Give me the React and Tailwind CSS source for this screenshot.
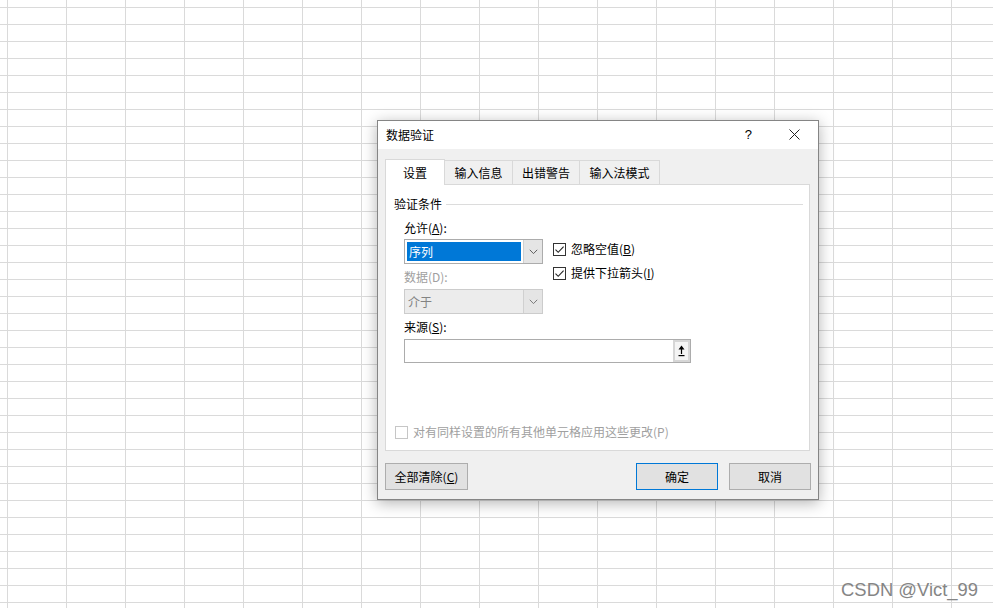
import React from "react";

const cjk = "font-['Noto_Sans_CJK_SC','Microsoft_YaHei',sans-serif]";

function Chevron({ color = "#606060" }) {
  return (
    <svg width="9" height="6" viewBox="0 0 9 6" fill="none">
      <path d="M0.8 0.8 L4.5 4.6 L8.2 0.8" stroke={color} strokeWidth="1" />
    </svg>
  );
}

function CheckBox({ checked, disabled, label }) {
  return (
    <div className="flex items-center h-[16px]">
      <div
        className={
          "w-[13px] h-[13px] border bg-white flex items-center justify-center " +
          (disabled ? "border-[#c6c6c6]" : "border-[#333333]")
        }
      >
        {checked && (
          <svg width="11" height="11" viewBox="0 0 11 11" fill="none">
            <path d="M1.5 5.6 L4.2 8.3 L9.6 2.6" stroke="#222" strokeWidth="1.1" />
          </svg>
        )}
      </div>
      <span className={"ml-[5px] " + (disabled ? "text-[#a0a0a0]" : "text-black")}>{label}</span>
    </div>
  );
}

function Tab({ label, width, active }) {
  return (
    <div
      className={
        "flex items-center justify-center border-t border-r border-[#d9d9d9] " +
        (active
          ? "h-[26px] bg-white border-l relative z-10"
          : "h-[25px] bg-[#f0f0f0] border-b")
      }
      style={{ width }}
    >
      {label}
    </div>
  );
}

export default function App() {
  return (
    <div
      className={
        "relative w-[993px] h-[608px] overflow-hidden bg-white " +
        "bg-[linear-gradient(to_right,#dadada_1px,transparent_1px),linear-gradient(to_bottom,#dadada_1px,transparent_1px)] " +
        "bg-size-[59px_17px] bg-position-[7px_7px]"
      }
    >
      {/* dialog window */}
      <div
        className={
          "absolute left-[377px] top-[120px] w-[442px] h-[380px] border border-[#858585] bg-[#f0f0f0] " +
          "shadow-[0_3px_14px_rgba(0,0,0,0.3)] flex flex-col text-[12px] leading-[16px] text-black " +
          cjk
        }
      >
        <div className="h-[28px] shrink-0 bg-white flex items-center pl-[8px] pb-px">
          <span>数据验证</span>
          <span className="ml-auto font-['Liberation_Sans',sans-serif] text-[13px]">?</span>
          <div className="ml-[36px] mr-[18px] w-[12px] h-[12px] flex items-center justify-center">
            <svg width="11" height="11" viewBox="0 0 11 11" fill="none">
              <path d="M0.5 0.5 L10.5 10.5 M10.5 0.5 L0.5 10.5" stroke="#222" strokeWidth="1" />
            </svg>
          </div>
        </div>

        <div className="flex flex-col pl-[7px] pt-[10px]">
          <div className="flex items-end -mb-px">
            <Tab label="设置" width={60} active />
            <Tab label="输入信息" width={68} />
            <Tab label="出错警告" width={67} />
            <Tab label="输入法模式" width={80} />
          </div>

          <div className="w-[425px] h-[267px] bg-white border border-[#d9d9d9] flex flex-col">
            <div className="flex items-center mt-[11px] pl-[8px] pr-[6px]">
              <span>验证条件</span>
              <div className="flex-1 h-px bg-[#dcdcdc] ml-[4px]" />
            </div>

            <div className="flex ml-[18px] mt-[8px]">
              <div className="w-[139px] flex flex-col">
                <span>允许(<span className="underline">A</span>):</span>
                <div className="mt-[3px] h-[25px] flex border border-[#acacac] bg-white">
                  <div className="flex-1 p-[2px]">
                    <div className="h-full bg-[#0078d7] text-white pl-[2px] flex items-center">序列</div>
                  </div>
                  <div className="w-[19px] bg-[#e5e5e5] border-l border-[#d0d0d0] flex items-center justify-center">
                    <Chevron />
                  </div>
                </div>
                <span className="mt-[5px] text-[#a0a0a0]">数据(D):</span>
                <div className="mt-[4px] h-[25px] flex border border-[#cccccc] bg-[#ececec]">
                  <div className="flex-1 pl-[3px] flex items-center text-[#838383]">介于</div>
                  <div className="w-[19px] bg-[#e5e5e5] border-l border-[#d0d0d0] flex items-center justify-center">
                    <Chevron color="#7a7a7a" />
                  </div>
                </div>
              </div>
              <div className="ml-[10px] pt-[21px] flex flex-col gap-[8px]">
                <CheckBox checked label={<>忽略空值(<span className="underline">B</span>)</>} />
                <CheckBox checked label={<>提供下拉箭头(<span className="underline">I</span>)</>} />
              </div>
            </div>

            <div className="flex flex-col ml-[18px]">
              <span className="mt-[5px]">来源(<span className="underline">S</span>):</span>
              <div className="mt-[4px] w-[287px] h-[24px] flex border border-[#acacac] bg-white">
                <div className="flex-1" />
                <div className="w-[17px] bg-[#d6d6d6] p-[2px]">
                  <div className="h-full bg-[#f4f4f4] flex items-center justify-center">
                    <svg width="7" height="12" viewBox="0 0 7 12" fill="#000">
                      <path d="M3.5 0.5 L0.5 4.5 L2.9 4.5 L2.9 9 L4.1 9 L4.1 4.5 L6.5 4.5 Z" />
                      <rect x="0.5" y="10" width="6" height="1.2" />
                    </svg>
                  </div>
                </div>
              </div>
            </div>

            <div className="mt-auto mb-[10px] pl-[9px]">
              <CheckBox disabled label="对有同样设置的所有其他单元格应用这些更改(P)" />
            </div>
          </div>

          <div className="mt-[12px] w-[426px] flex justify-between">
            <div className="w-[83px] h-[27px] bg-[#e1e1e1] border border-[#adadad] flex items-center justify-center">
              全部清除(<span className="underline">C</span>)
            </div>
            <div className="flex gap-[11px]">
              <div className="w-[82px] h-[27px] bg-[#e1e1e1] border border-[#0078d7] flex items-center justify-center">
                确定
              </div>
              <div className="w-[82px] h-[27px] bg-[#e1e1e1] border border-[#adadad] flex items-center justify-center">
                取消
              </div>
            </div>
          </div>
        </div>
      </div>

      <div className="absolute right-[15px] bottom-[8px] font-['Liberation_Sans',sans-serif] text-[18.4px] leading-[20px] text-[#858585]">
        CSDN @Vict_99
      </div>
    </div>
  );
}
